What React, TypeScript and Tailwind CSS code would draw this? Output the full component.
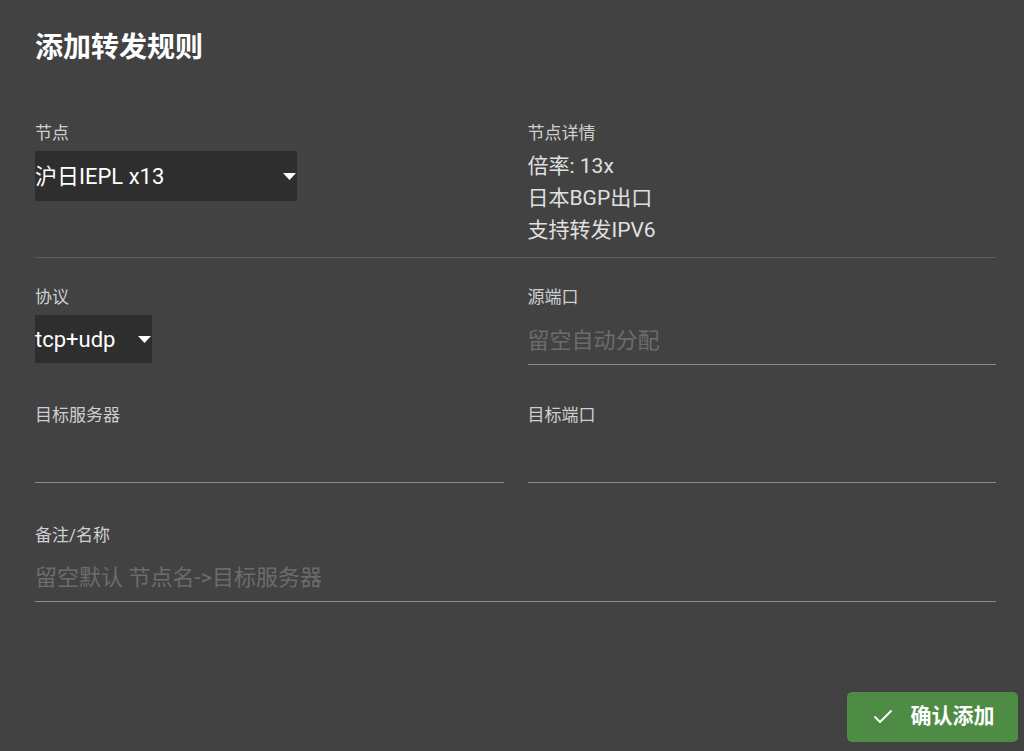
import React from 'react';
import { Check } from 'lucide-react';

const FONT = "font-['Roboto','Noto_Sans_CJK_SC',sans-serif]";

const Label: React.FC<{ text: string }> = ({ text }) => (
  <div className="text-[17px] leading-5 text-[#cfcfcf]">{text}</div>
);

const Caret = () => (
  <svg width="13" height="7" viewBox="0 0 13 7" className="shrink-0">
    <path d="M0 0h13L6.5 7z" fill="#ffffff" />
  </svg>
);

const TextField: React.FC<{ label: string; placeholder?: string; tall?: boolean }> = ({ label, placeholder, tall = true }) => (
  <div className="flex flex-col">
    <Label text={label} />
    <div className={(tall ? "h-[58px] pt-[10px]" : "h-[57px] pt-[9px]") + " flex items-center border-b border-[#8a8a8a] text-[22px] text-[#6c6c6c]"}>
      {placeholder}
    </div>
  </div>
);

export default function App() {
  return (
    <div className={"w-[1024px] h-[751px] bg-[#424242] text-white relative overflow-hidden " + FONT}>
      <div className="pl-[35px] pt-[32px] w-[996px]">
        <h1 className="text-[28px] leading-8 font-bold text-white">添加转发规则</h1>

        <div className="grid grid-cols-2 gap-x-6 mt-[59px]">
          <div className="flex flex-col">
            <Label text="节点" />
            <div className="mt-2 w-[262px] h-[50px] bg-[#2e2e2e] flex items-center justify-between pr-[1px]">
              <span className="text-[22px] text-white">沪日IEPL x13</span>
              <Caret />
            </div>
          </div>
          <div className="flex flex-col">
            <Label text="节点详情" />
            <div className="mt-[7px] text-[21px] leading-8 text-[#e0e0e0]">
              <div>倍率: 13x</div>
              <div>日本BGP出口</div>
              <div>支持转发IPV6</div>
            </div>
          </div>
        </div>

        <div className="h-px bg-[#5c5c5c] mt-[11px]" />

        <div className="grid grid-cols-2 gap-x-6 mt-[29px]">
          <div className="flex flex-col">
            <Label text="协议" />
            <div className="mt-2 w-[117px] h-[48px] bg-[#2e2e2e] flex items-center justify-between pr-[1px]">
              <span className="text-[22px] text-white">tcp+udp</span>
              <Caret />
            </div>
          </div>
          <TextField label="源端口" placeholder="留空自动分配" />
        </div>

        <div className="grid grid-cols-2 gap-x-6 mt-[40px]">
          <TextField label="目标服务器" />
          <TextField label="目标端口" />
        </div>

        <div className="mt-[42px]">
          <TextField label="备注/名称" placeholder="留空默认 节点名->目标服务器" tall={false} />
        </div>
      </div>

      <button className="absolute right-[6px] bottom-[9px] w-[171px] h-[50px] rounded-[5px] bg-[#4e8c46] flex items-center justify-center gap-4 text-white text-[21px] font-bold">
        <Check size={24} strokeWidth={1.8} />
        <span>确认添加</span>
      </button>
    </div>
  );
}
